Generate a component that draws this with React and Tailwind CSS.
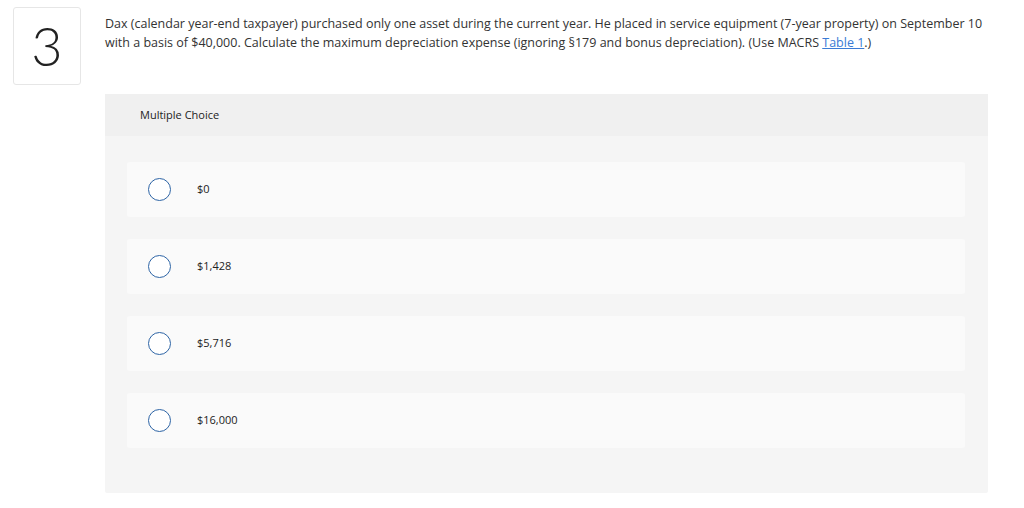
import React from "react";

const options = ["$0", "$1,428", "$5,716", "$16,000"];

const App = () => {
  return (
    <div className="w-[1024px] h-[508px] bg-white text-[#333] font-['Open_Sans','Lato',sans-serif] flex">
      {/* Question number */}
      <div className="pl-[13px] pt-[7px]">
        <div className="w-[68px] h-[78px] border border-[#e6e6e6] rounded-[3px] flex items-center justify-center">
          <span className="text-[54px] font-light leading-none text-[#222] font-['Lato',sans-serif]">3</span>
        </div>
      </div>

      <div className="ml-[24px] w-[883px] flex flex-col">
        <p className="pt-[14px] text-[12.5px] leading-[19px] text-[#333]">
          Dax (calendar year-end taxpayer) purchased only one asset during the current year. He placed in service equipment (7-year property) on September 10 with a basis of $40,000. Calculate the maximum depreciation expense (ignoring §179 and bonus depreciation). (Use MACRS{" "}
          <a href="#" className="text-[#3a7bd5] underline">Table 1</a>.)
        </p>

        <div className="mt-[42px] h-[399px] bg-[#f5f5f5] rounded-[2px] flex flex-col">
          <div className="h-[42px] bg-[#f0f0f0] pl-[35px] flex items-center text-[11px] text-[#222]">
            Multiple Choice
          </div>
          <div className="pl-[22px] pr-[23px] pt-[26px] flex flex-col gap-[22px]">
            {options.map((opt) => (
              <div key={opt} className="h-[55px] bg-[#fafafa] rounded-[3px] flex items-center">
                <span className="ml-[21px] w-[23px] h-[23px] rounded-full border border-[#2d64a5] bg-white" />
                <span className="ml-[26px] text-[11px] text-[#222]">{opt}</span>
              </div>
            ))}
          </div>
        </div>
      </div>
    </div>
  );
};

export default App;
